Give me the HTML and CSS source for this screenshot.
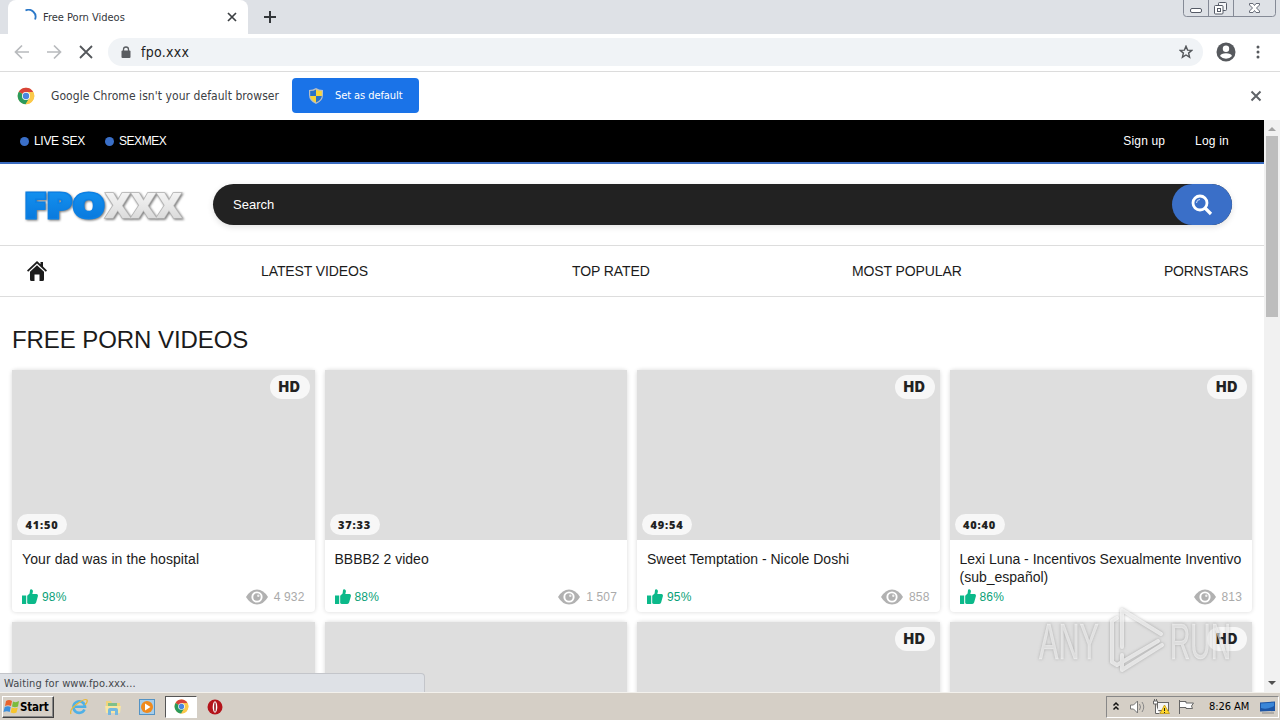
FILE: index.html
```html
<!DOCTYPE html>
<html lang="en">
<head>
<meta charset="utf-8">
<title>Free Porn Videos</title>
<link rel="stylesheet" href="styles.css">
</head>
<body>
<svg class="defs" width="0" height="0" aria-hidden="true">
  <defs>
    <linearGradient id="blue" x1="0" y1="0" x2="0" y2="1"><stop offset="0" stop-color="#1799f5"/><stop offset="1" stop-color="#0672d8"/></linearGradient>
    <linearGradient id="silver" x1="0" y1="0" x2="0" y2="1"><stop offset="0" stop-color="#fff"/><stop offset="1" stop-color="#d2d2d2"/></linearGradient>
    <symbol id="chrome" viewBox="0 0 18 18">
      <circle cx="9" cy="9" r="8.300" fill="#fbc94a"/>
      <path d="M9 9L1.800 4.800A8.300 8.300 0 0 1 16.200 5H9z" fill="#d8433a"/>
      <path d="M9 9L1.800 4.800A8.300 8.300 0 0 0 8.600 17.300L12.500 11z" fill="#2b9a5c"/>
      <path d="M9 5h7.200A8.300 8.300 0 0 1 8.600 17.300L12.500 11z" fill="#fbc94a"/>
      <circle cx="9" cy="9" r="4" fill="#fff"/><circle cx="9" cy="9" r="3.200" fill="#4a86e0"/>
    </symbol>
    <symbol id="thumb" viewBox="0 0 16 16">
      <path d="M0 6.500h4.200V15H0zM5.200 6.800L7.600 4.500 8 1.200Q8.200 0 9.400.2 11.400.8 10.800 3L10.300 5H14.600Q16.400 5.400 15.800 7.400L14.200 13.200Q13.800 15 12.200 15H6.600L5.200 14.200z" fill="#0bb98a"/>
    </symbol>
    <symbol id="eye" viewBox="0 0 22 16">
      <path d="M0 8Q4.500.5 11 .5T22 8Q17.500 15.500 11 15.500T0 8z" fill="#b1b1b1"/>
      <circle cx="11" cy="8" r="5.600" fill="#fff"/><circle cx="11" cy="8" r="3.700" fill="#b1b1b1"/><circle cx="12.300" cy="6.800" r="1.200" fill="#eee"/>
    </symbol>
  </defs>
</svg>

<div class="tabstrip">
  <div class="tab">
    <svg class="spinner" width="16" height="16" viewBox="0 0 16 16"><path d="M3.500 1.500A7 7 0 0 1 13 10.500" fill="none" stroke="#2b78c8" stroke-width="1.800"/></svg>
    <span class="tab-title">Free Porn Videos</span>
    <svg width="10" height="10" viewBox="0 0 10 10"><path d="M1 1l8 8M9 1L1 9" stroke="#3c4043" stroke-width="1.700"/></svg>
  </div>
  <svg class="plus" width="12" height="12" viewBox="0 0 12 12"><path d="M6 0v12M0 6h12" stroke="#33363a" stroke-width="2"/></svg>
  <svg class="winbuttons" width="94" height="18" viewBox="0 0 94 18">
    <path d="M.5 0V13.500Q.5 16.500 3.500 16.500H89.500Q92.500 16.500 92.500 13.500V0M25.500 0V16.500M50.500 0V16.500" fill="none" stroke="#858a96"/>
    <rect x="7.500" y="8.500" width="11" height="4" rx="1.500" fill="#fff" stroke="#555a66"/>
    <rect x="35.500" y="2.500" width="8" height="8" rx="1" fill="#f5f6f8" stroke="#555a66"/><rect x="31.500" y="5.500" width="8.500" height="8.500" rx="1" fill="#fff" stroke="#555a66"/><rect x="34.500" y="8.500" width="3" height="3" fill="none" stroke="#555a66"/>
    <path d="M66.500 3.500h3.500l1.500 2 1.500-2h3.500v1.500l-3 3 3 3v1.500h-3.500l-1.500-2-1.500 2h-3.500v-1.500l3-3-3-3z" fill="#fff" stroke="#666b77"/>
  </svg>
</div>

<div class="toolbar">
  <svg class="navicons" width="80" height="16" viewBox="0 0 80 16" fill="none">
    <path d="M15 8H2M8 1.500L1.500 8 8 14.500M33 8H46M40 1.500L46.500 8 40 14.500" stroke="#b8babd" stroke-width="1.700"/>
    <path d="M66 2l12 12M78 2L66 14" stroke="#54575b" stroke-width="1.800"/>
  </svg>
  <div class="omnibox">
    <svg width="10" height="13" viewBox="0 0 10 13"><rect x=".5" y="4.500" width="9" height="7.500" rx="1" fill="#5a5d61"/><path d="M2.500 5V3.500a2.500 2.500 0 0 1 5 0V5" fill="none" stroke="#5a5d61" stroke-width="1.300"/></svg>
    <span class="url">fpo.xxx</span>
    <svg width="14" height="14" viewBox="0 0 14 14"><path d="M7 1.200L8.600 5.100 12.800 5.400 9.600 8.100 10.600 12.200 7 10 3.400 12.200 4.400 8.100 1.200 5.400 5.400 5.100z" fill="none" stroke="#54575b" stroke-width="1.400"/></svg>
  </div>
  <svg class="avatar" width="20" height="20" viewBox="0 0 20 20"><circle cx="10" cy="10" r="9.500" fill="#56595d"/><circle cx="10" cy="6.700" r="3.200" fill="#fff"/><path d="M4 14Q5 11.300 10 11.300T16 14Q13.500 16.800 10 16.800T4 14z" fill="#fff"/></svg>
  <svg class="dots" width="4" height="14" viewBox="0 0 4 14" fill="#56595d"><circle cx="2" cy="2" r="1.500"/><circle cx="2" cy="7" r="1.500"/><circle cx="2" cy="12" r="1.500"/></svg>
</div>

<div class="infobar">
  <svg width="18" height="18"><use href="#chrome"/></svg>
  <span class="info-text">Google Chrome isn't your default browser</span>
  <div class="default-btn">
    <svg width="14" height="16" viewBox="0 0 14 16"><path d="M7 0Q10 2 14 2V7Q14 13 7 16 0 13 0 7V2Q4 2 7 0z" fill="#b9bfc4"/><path d="M7 1.500V8H1.200V3Q5 3 7 1.500zM7 8H12.800Q12.300 12.300 7 14.600z" fill="#2a73c9"/><path d="M7 1.500V8H12.800V3Q9 3 7 1.500zM7 8H1.200Q1.700 12.300 7 14.600z" fill="#f7d53a"/></svg>
    <span>Set as default</span>
  </div>
  <svg class="info-close" width="12" height="12" viewBox="0 0 12 12"><path d="M1.500 1.500l9 9M10.500 1.500l-9 9" stroke="#5f6368" stroke-width="2"/></svg>
</div>

<div class="viewport">
  <main class="page">
    <div class="topbar">
      <span class="live"><i></i>LIVE SEX</span>
      <span class="live"><i></i>SEXMEX</span>
      <span class="signup">Sign up</span>
      <span class="login">Log in</span>
    </div>
    <header class="header">
      <svg class="logo" width="164" height="34" viewBox="0 0 164 34">
        <g class="logo-text">
          <text class="logo-xxx" x="81" y="30" textLength="77" lengthAdjust="spacingAndGlyphs">XXX</text>
          <text class="logo-fpo" x="0" y="30" textLength="81" lengthAdjust="spacingAndGlyphs">FPO</text>
        </g>
      </svg>
      <div class="search"><span>Search</span>
        <div class="search-btn"><svg width="22" height="22" viewBox="0 0 22 22"><circle cx="9" cy="9" r="7" fill="none" stroke="#fff" stroke-width="2.800"/><path d="M5.500 9A3.500 3.500 0 0 1 9 5.500" fill="none" stroke="#cfe0ff"/><path d="M14 14l6 6" stroke="#fff" stroke-width="3.200"/></svg></div>
      </div>
    </header>
    <nav class="nav">
      <svg width="20" height="20" viewBox="0 0 20 20" fill="#1b1b1b"><path d="M10 0l3.500 3.300V1H16v4.600l4 4-1.200 1.200L10 2.600 1.200 10.800 0 9.600z"/><path d="M10 4.200l7 6.500V18.500Q17 20 15.500 20H12.500V13.500H7.500V20H4.500Q3 20 3 18.500V10.700z"/></svg>
      <span class="n1">LATEST VIDEOS</span><span class="n2">TOP RATED</span><span class="n3">MOST POPULAR</span><span class="n4">PORNSTARS</span>
    </nav>
    <h1>FREE PORN VIDEOS</h1>
    <section class="grid">
      <article class="card"><div class="thumb"><b class="hd">HD</b><b class="time">41:50</b></div><p class="wide">Your dad was in the hospital</p><div class="meta"><svg width="16" height="16"><use href="#thumb"/></svg><em>98%</em><svg width="22" height="16"><use href="#eye"/></svg><span>4 932</span></div></article>
      <article class="card"><div class="thumb"><b class="time">37:33</b></div><p>BBBB2 2 video</p><div class="meta"><svg width="16" height="16"><use href="#thumb"/></svg><em>88%</em><svg width="22" height="16"><use href="#eye"/></svg><span>1 507</span></div></article>
      <article class="card"><div class="thumb"><b class="hd">HD</b><b class="time">49:54</b></div><p>Sweet Temptation - Nicole Doshi</p><div class="meta"><svg width="16" height="16"><use href="#thumb"/></svg><em>95%</em><svg width="22" height="16"><use href="#eye"/></svg><span>858</span></div></article>
      <article class="card"><div class="thumb"><b class="hd">HD</b><b class="time">40:40</b></div><p>Lexi Luna - Incentivos Sexualmente Inventivo (sub_español)</p><div class="meta"><svg width="16" height="16"><use href="#thumb"/></svg><em>86%</em><svg width="22" height="16"><use href="#eye"/></svg><span>813</span></div></article>
      <article class="card"><div class="thumb"></div></article>
      <article class="card"><div class="thumb"></div></article>
      <article class="card"><div class="thumb"><b class="hd">HD</b></div></article>
      <article class="card"><div class="thumb"><b class="hd">HD</b></div></article>
    </section>
  </main>
  <div class="scrollbar">
    <svg width="8" height="4" viewBox="0 0 8 4"><path d="M0 4l4-4 4 4z" fill="#a3a3a3"/></svg>
    <div class="scroll-thumb"></div>
    <svg width="8" height="4" viewBox="0 0 8 4"><path d="M0 0l4 4 4-4z" fill="#505050"/></svg>
  </div>
  <div class="status">Waiting for www.fpo.xxx...</div>
  <svg class="watermark" width="204" height="70" viewBox="0 0 204 70">
    <g class="wm">
      <text x="3" y="54" textLength="60" lengthAdjust="spacingAndGlyphs">ANY</text>
      <text x="134" y="54" textLength="61" lengthAdjust="spacingAndGlyphs">RUN</text>
      <path d="M81 13L76 16V57L81 60L122 36M86 42V5L125 29M86 5V10M86 50V65L126 40"/>
    </g>
  </svg>
</div>

<div class="taskbar">
  <div class="start">
    <svg width="17" height="16" viewBox="0 0 17 16"><path d="M3 2Q6 0 9 2L8 7Q5 5.500 2 7z" fill="#e8622c"/><path d="M10 2.500Q13 4 16 2L15 7.500Q12 9 9 7.500z" fill="#7bbb3c"/><path d="M1.700 8Q5 6.500 7.700 8L6.700 13Q4 11.500.5 13z" fill="#3c8fdc"/><path d="M8.700 8.500Q12 10 14.800 8.500L13.500 13.500Q11 15 7.700 13.500z" fill="#f7c52d"/></svg>
    <span>Start</span>
  </div>
  <svg class="ql ie" width="18" height="18" viewBox="0 0 18 18"><path d="M14.500 11.500A5.800 5.800 0 1 1 15 8.700H5" fill="none" stroke="#4fb0e6" stroke-width="2.600"/><path d="M1 16Q-1 12 7 6T17 2Q18 4 15 7" fill="none" stroke="#e9b93a" stroke-width="1.300"/></svg>
  <svg class="ql" width="18" height="18" viewBox="0 0 18 18"><path d="M2 3h5l1 2h8v9H2z" fill="#f0d47c"/><path d="M4 5h9v3H4z" fill="#7fc08a"/><path d="M1 8h16l-1 7H2z" fill="#f8e6a2"/><path d="M4 17v-5q0-2 2-2h6q2 0 2 2v5h-3v-4H7v4z" fill="#74b8df"/></svg>
  <svg class="ql" width="18" height="18" viewBox="0 0 18 18"><rect x="1.500" y="1.500" width="15" height="15" fill="#a6cdea" stroke="#5493c4"/><circle cx="9" cy="9" r="6" fill="#f08a1d"/><path d="M7 5.500v7L12.500 9z" fill="#fff"/></svg>
  <div class="active"><svg width="15" height="15"><use href="#chrome"/></svg></div>
  <svg class="opera" width="16" height="16" viewBox="0 0 16 16"><circle cx="8" cy="8" r="7.500" fill="#b4141b"/><ellipse cx="8" cy="8" rx="2.300" ry="5.800" fill="#fff"/><ellipse cx="8" cy="8" rx=".8" ry="4.800" fill="#8c0d14"/></svg>
  <div class="tray">
    <svg width="90" height="18" viewBox="0 0 90 18" fill="none">
      <path d="M3.500 7.500L6 5 8.500 7.500M3.500 11.500L6 9 8.500 11.500" stroke="#111" stroke-width="1.500"/>
      <path d="M20.500 7h3l4-4v12l-4-4h-3z" fill="#fff" stroke="#777"/><path d="M29.500 6q2 3 0 6M32 4q3.500 5 0 10" stroke="#888"/>
      <rect x="47.500" y="4.500" width="11" height="8" fill="#f4f4f4" stroke="#666"/><path d="M43.500 3h4v3h-4zM45.500 6V15.500h4M44.500 1v2M46.500 1v2" fill="#fff" stroke="#666"/><path d="M54.500 7l5 8.500H50z" fill="#ffd82e" stroke="#b98d00" stroke-width=".7"/><path d="M54.500 10v3M54.500 14v1" stroke="#222"/>
      <path d="M69.500 2V16M70 3.500h6v1.500h7.500l-2 3 1 2.500h-6.500v-1h-6" fill="#fff" stroke="#666"/>
    </svg>
    <span>8:26 AM</span>
    <svg width="16" height="14" viewBox="0 0 16 14"><path d="M0 2.500L15 1.500V11L0 11.500z" fill="#1d55a5"/><path d="M1 3.500L14 2.500V6Q7 10 1 8z" fill="#3a86d8"/><path d="M2 13h12" stroke="#888"/></svg>
  </div>
</div>
</body>
</html>
```

FILE: styles.css
```css
* { box-sizing: border-box; }
body { margin: 0; width: 1280px; height: 720px; overflow: hidden; background: #fff; font-family: "Liberation Sans", Arial, sans-serif; display: flex; flex-direction: column; }
svg { display: block; flex: none; }
.defs { position: absolute; }
.tabstrip, .toolbar, .infobar, .status, .taskbar { font-family: "DejaVu Sans Condensed", "DejaVu Sans", sans-serif; font-stretch: condensed; }
.tabstrip { height: 34px; flex: none; background: #dee1e6; display: flex; align-items: flex-start; padding-left: 8px; }
.tab { width: 240px; height: 34px; background: #fff; border-radius: 8px 8px 0 0; display: flex; align-items: center; padding: 0 11px 0 14px; }
.tab-title { flex: 1; font-size: 11px; letter-spacing: 0; margin-left: 5px; color: #33363a; }
.plus { margin: 11px 0 0 16px; }
.winbuttons { margin-left: auto; margin-right: 3px; }
.toolbar { height: 38px; flex: none; border-bottom: 1px solid #dcdcdc; display: flex; align-items: center; padding: 0 0 1px 14px; }
.omnibox { width: 1095px; height: 28px; border-radius: 14px; background: #f0f3f6; margin-left: 14px; display: flex; align-items: center; padding: 0 10px 0 13px; }
.url { flex: 1; font-size: 14px; margin-left: 10px; color: #222; letter-spacing: .3px; }
.avatar { margin-left: 13px; }
.dots { margin-left: 20px; }
.infobar { height: 48px; flex: none; display: flex; align-items: center; padding: 0 18px 1px 17px; }
.info-text { width: 241px; margin-left: 16px; font-size: 12px; letter-spacing: 0.06px; color: #3c4043; white-space: nowrap; }
.default-btn { width: 127px; height: 35px; border-radius: 4px; background: #1a73e8; color: #fff; display: flex; align-items: center; padding-left: 17px; gap: 12px; font-size: 11px; letter-spacing: -0.08px; white-space: nowrap; }
.info-close { margin-left: auto; }
.viewport { height: 572px; flex: none; display: flex; position: relative; overflow: hidden; }
.page { width: 1264px; }
.topbar { height: 44px; background: #000; border-bottom: 2px solid #3a6bbf; display: flex; align-items: center; padding: 0 35px 0 20px; color: #fff; font-size: 12px; }
.live { display: flex; align-items: center; gap: 5px; margin-right: 20px; letter-spacing: -0.3px; }
.live + .live { letter-spacing: -0.45px; }
.live i { width: 9px; height: 9px; border-radius: 50%; background: #3a6fc8; }
.signup { margin-left: auto; margin-right: 30px; letter-spacing: .15px; }
.login { letter-spacing: .2px; }
.header { height: 82px; border-bottom: 1px solid #ddd; display: flex; align-items: center; padding: 0 32px 0 24px; }
.logo { margin-right: 25px; overflow: visible; }
.logo-text { font-family: "Open Sans", sans-serif; font-weight: 800; font-size: 35px; filter: drop-shadow(1.5px 1.5px 1px #777); }
.logo-fpo { fill: url(#blue); stroke: #0c80e4; stroke-width: 3px; stroke-linejoin: miter; paint-order: stroke; }
.logo-xxx { fill: url(#silver); stroke: #b5b5b5; stroke-width: 1.6px; paint-order: stroke; }
.search { flex: 1; height: 41px; border-radius: 21px; background: #222; display: flex; align-items: center; justify-content: space-between; padding-left: 20px; color: #fff; font-size: 13px; box-shadow: 0 2px 6px rgba(0,0,0,.12); }
.search-btn { width: 60px; height: 41px; border-radius: 21px; background: #3a6fc8; display: flex; align-items: center; justify-content: center; }
.nav { height: 51px; border-bottom: 1px solid #ddd; display: flex; align-items: center; padding: 0 16px 0 27px; font-size: 14px; letter-spacing: -0.1px; color: #1b1b1b; white-space: nowrap; }
.n1 { margin-left: 214px; width: 311px; }
.n2 { width: 280px; }
.n3 { width: 312px; }
.n4 { letter-spacing: -0.22px; }
h1 { margin: 27px 0 0 12px; font-weight: 400; font-size: 24px; letter-spacing: -0.07px; line-height: 32px; height: 46px; color: #1b1b1b; }
.grid { display: grid; grid-template-columns: repeat(4, 302.5px); gap: 10px; padding-left: 12px; }
.card { height: 242px; border-radius: 4px; background: #fff; box-shadow: 0 0 4px rgba(0,0,0,.16); display: flex; flex-direction: column; }
.thumb { height: 170px; flex: none; background: #dedede; display: flex; flex-direction: column; justify-content: space-between; padding: 5px; }
.hd { align-self: flex-end; width: 40px; height: 24px; border-radius: 12px; background: #f7f7f7; text-align: center; font: 900 14px/24px Inter, sans-serif; letter-spacing: .7px; color: #222; }
.time { margin-top: auto; width: 50px; height: 21px; border-radius: 11px; background: #f7f7f7; text-align: center; font: 800 11px/21px "Open Sans", sans-serif; letter-spacing: .8px; color: #222; }
.card p { margin: 10px 0 0 10px; height: 36px; font-size: 14px; line-height: 18px; color: #1b1b1b; white-space: normal; }
.card .wide { letter-spacing: .09px; }
.meta { display: flex; align-items: center; height: 16px; padding: 0 10px; margin-top: 3px; font-size: 12px; color: #aaa; }
.meta em { font-style: normal; color: #0a9f78; margin-left: 4px; flex: 1; letter-spacing: .2px; }
.meta span { margin-left: 6px; letter-spacing: .15px; }
.scrollbar { width: 16px; background: #f1f1f1; display: flex; flex-direction: column; align-items: center; padding: 7px 0; }
.scroll-thumb { width: 12px; height: 181px; margin-top: 5px; margin-bottom: auto; background: #bdbdbd; }
.status { position: absolute; left: 0; bottom: 0; width: 425px; height: 19px; background: #dee1e6; border: 1px solid #c3c5ca; border-left: 0; border-bottom: 0; border-radius: 0 4px 0 0; font-size: 11px; line-height: 19px; padding-left: 4px; letter-spacing: 0.1px; color: #44474b; }
.watermark { position: absolute; left: 1036px; top: 485px; }
.wm { font-family: "Liberation Sans", sans-serif; font-size: 50px; fill: rgba(255,255,255,.55); stroke: rgba(255,255,255,.3); stroke-width: .8px; filter: drop-shadow(0 0 1.5px rgba(70,70,70,.55)); }
.wm path { fill: none; stroke: rgba(255,255,255,.65); stroke-width: 4px; stroke-linecap: round; stroke-linejoin: round; }
.taskbar { height: 28px; background: #d5cfc6; border-top: 1px solid #f3f1ec; display: flex; align-items: center; padding: 0 1px 0 2px; }
.start { width: 52px; height: 22px; border: 1px solid; border-color: #fff #404040 #404040 #fff; box-shadow: inset -1px -1px #888; display: flex; align-items: center; font-size: 11.5px; font-weight: 700; letter-spacing: -0.2px; color: #000; }
.ql { margin-right: 16px; }
.ie { margin-left: 16px; }
.active { width: 32px; height: 22px; margin-left: -7px; background: #fff; border: 1px solid; border-color: #555 #fff #fff #555; display: flex; align-items: center; justify-content: center; }
.opera { margin-left: 10px; }
.tray { margin-left: auto; width: 173px; height: 22px; border: 1px solid; border-color: #888 #fff #fff #888; display: flex; align-items: center; padding-left: 3px; }
.tray span { margin-left: 9px; width: 51px; font-size: 11px; letter-spacing: -0.05px; white-space: nowrap; color: #000; }
```
